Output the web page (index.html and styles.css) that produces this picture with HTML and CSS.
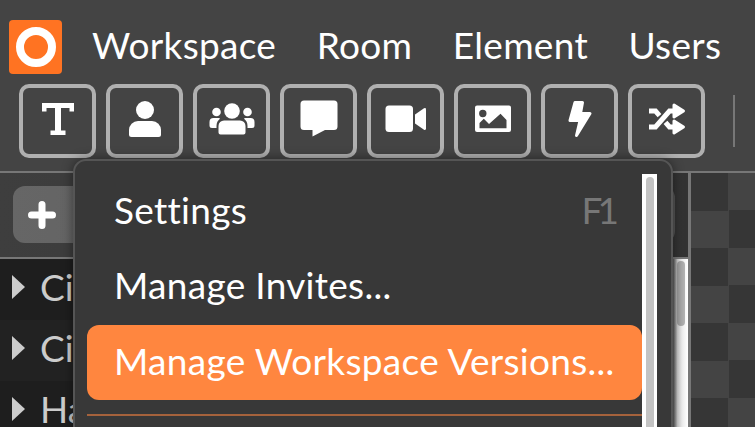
FILE: index.html
```html
<!DOCTYPE html>
<html lang="en">
<head>
<meta charset="utf-8">
<title>Workspace</title>
<link rel="stylesheet" href="styles.css">
</head>
<body>
<div class="app">
  <header class="topbar">
    <div class="menubar">
      <div class="logo"><span class="logo-ring"></span></div>
      <nav class="menus">
        <span class="menu-title">Workspace</span>
        <span class="menu-title">Room</span>
        <span class="menu-title">Element</span>
        <span class="menu-title">Users</span>
      </nav>
    </div>
    <div class="toolbar">
      <button class="tool"><svg viewBox="0 0 46 38"><path d="M7 3h32v8.500h-4.500V8H26v22.500h4.500V35h-15v-4.500H20V8h-8.500v3.500H7z"/></svg></button>
      <button class="tool"><svg viewBox="0 0 46 38"><circle cx="23" cy="10" r="9"/><path d="M16 21h14a9 9 0 0 1 9 9v4.500a2.500 2.500 0 0 1-2.500 2.500h-27A2.500 2.500 0 0 1 7 34.500V30a9 9 0 0 1 9-9z"/></svg></button>
      <button class="tool"><svg viewBox="0 0 46 38"><circle cx="23" cy="11" r="7.800"/><circle cx="7.500" cy="12" r="4.300"/><circle cx="38.500" cy="12" r="4.300"/><path d="M15 20.500h16a5.500 5.500 0 0 1 5.500 5.500v6.500a2 2 0 0 1-2 2h-23a2 2 0 0 1-2-2V26a5.500 5.500 0 0 1 5.500-5.500z"/><path d="M4.500 18H9.500q1.500 0 1.500 .8q-3.500 2.500-3.500 7.200V28H3a2.500 2.500 0 0 1-2.500-2.500V22a4 4 0 0 1 4-4z"/><path d="M41.500 18H36.500q-1.500 0-1.500 .8q3.500 2.500 3.500 7.200V28H43a2.500 2.500 0 0 0 2.500-2.500V22a4 4 0 0 0-4-4z"/></svg></button>
      <button class="tool"><svg viewBox="0 0 46 38"><path d="M8 .5h30a3.500 3.500 0 0 1 3.500 3.500v22.500a3.500 3.500 0 0 1-3.500 3.500H29L16.500 36.500V30H8a3.500 3.500 0 0 1-3.500-3.500V4A3.500 3.500 0 0 1 8 .5z"/></svg></button>
      <button class="tool"><svg viewBox="0 0 46 38"><rect x="2.500" y="5.500" width="27.500" height="26.500" rx="3.500"/><path d="M32 14.500L41 8.300q2-.8 2 1.200V28.500q0 2-2 1.200L32 23.500z"/></svg></button>
      <button class="tool"><svg viewBox="0 0 46 38"><path fill-rule="evenodd" d="M7 5.500h32a2 2 0 0 1 2 2V30a2 2 0 0 1-2 2H7a2 2 0 0 1-2-2V7.500a2 2 0 0 1 2-2zM9.500 28.200V23L13.800 18.800L19 24L30.500 13.800L36.500 20V28.200zM12.800 9.800a3.700 3.700 0 1 0 0 7.400a3.700 3.700 0 0 0 0-7.400z"/></svg></button>
      <button class="tool"><svg viewBox="0 0 46 38"><path class="bolt" d="M18 2.500h7.500L23.500 13.500H33L19.500 35.500L23 20.500H13z"/></svg></button>
      <button class="tool"><svg viewBox="0 0 46 38"><path class="shuffle-line" d="M5 27h6.500l14-16H31M5 11h6.500l4 4.600M21.500 22.400l4 4.600H31"/><path class="shuffle-head" d="M30 5l9.500 6L30 17zM30 21l9.500 6L30 33z"/></svg></button>
      <span class="tool-sep"></span>
    </div>
  </header>
  <main class="main">
    <section class="panel">
      <div class="panel-head">
        <button class="add-btn"><svg class="plus" viewBox="0 0 28 28"><path d="M14 3.500v21M3.500 14h21"/></svg></button>
      </div>
      <div class="panel-body">
        <ul class="tree">
          <li class="tree-row"><span class="caret"></span>Ci</li>
          <li class="tree-row tree-row-alt"><span class="caret"></span>Ci</li>
          <li class="tree-row"><span class="caret"></span>Ha</li>
        </ul>
        <div class="tree-scroll"><span class="tree-thumb"></span></div>
      </div>
    </section>
    <section class="canvas"></section>
  </main>
  <div class="dropdown">
    <div class="dropdown-list">
      <div class="item"><span>Settings</span><span class="shortcut">F1</span></div>
      <div class="item"><span>Manage Invites...</span></div>
      <div class="item item-active"><span>Manage Workspace Versions...</span></div>
      <hr class="item-sep">
    </div>
    <div class="dropdown-scroll"><span class="dropdown-thumb"></span></div>
  </div>
</div>
</body>
</html>
```

FILE: styles.css
```css
* { box-sizing: border-box; }
html, body { margin: 0; height: 100%; overflow: hidden; }
body { background: #444; color: #fff; font-family: Lato, "Liberation Sans", sans-serif; }
.app { position: relative; width: 755px; height: 427px; overflow: hidden; display: flex; flex-direction: column; }

.topbar { height: 173px; flex: none; background: #444; border-bottom: 2px solid #777; padding: 20px 0 0 9px; }
.menubar { display: flex; align-items: center; height: 54px; }
.logo { width: 53px; height: 54px; border-radius: 4px; background: #ff7322; display: flex; align-items: center; justify-content: center; }
.logo-ring { width: 40px; height: 40px; border-radius: 50%; border: 8.500px solid #fff; }
.menus { display: flex; gap: 40.500px; margin-left: 30px; padding-bottom: 4px; font-size: 37px; line-height: 50px; letter-spacing: .3px; }
.menu-title { white-space: nowrap; }

.toolbar { display: flex; gap: 10px; align-items: center; margin: 10px 0 0 10px; }
.tool { width: 77px; height: 74px; padding: 0 0 5px; background: none; border: 4px solid #b0b0b0; border-radius: 10px; display: flex; align-items: center; justify-content: center; }
.tool svg { width: 46px; height: 38px; flex: none; fill: #fff; }
.bolt { stroke: #fff; stroke-width: 3; stroke-linejoin: round; }
.shuffle-line { fill: none; stroke: #fff; stroke-width: 5; }
.shuffle-head { stroke: #fff; stroke-width: 3; stroke-linejoin: round; }
.tool-sep { width: 2px; height: 52px; margin-left: 18px; background: #777; }

.main { flex: 1; display: flex; min-height: 0; }
.panel { width: 688px; flex: none; display: flex; flex-direction: column; }
.panel-head { height: 86px; flex: none; padding-top: 13px; padding-left: 13px; background: linear-gradient(90deg, #3e3e3e, #333); border-bottom: 2px solid #777; }
.add-btn { width: 662px; height: 57px; padding: 0 0 0 15px; border: 0; border-radius: 12px; background: linear-gradient(90deg, #666, #555); display: flex; align-items: center; }
.plus { width: 28px; height: 28px; fill: none; stroke: #fff; stroke-width: 7; stroke-linecap: round; }
.panel-body { flex: 1; display: flex; background: #1e1e1e; min-height: 0; }
.tree { flex: 1; list-style: none; margin: 0; padding: 0; }
.tree-row { height: 61px; display: flex; align-items: center; padding: 0 0 7px 12px; font-size: 37px; color: #ccc; white-space: nowrap; }
.tree-row-alt { background: #222; }
.caret { width: 0; height: 0; margin: 2px 15px 0 0; border-style: solid; border-width: 12px 0 12px 13px; border-color: transparent transparent transparent #ccc; }
.tree-scroll { width: 15px; flex: none; padding: 2px 3px 0 4px; background: linear-gradient(90deg, #555, #ccc 30%, #eee 60%, #fff); }
.tree-thumb { display: block; height: 65px; border-radius: 4px; background: linear-gradient(90deg, #999, #b5b5b5); }

.canvas { flex: 1; border-left: 3px solid #777; background-color: #444; background-image: conic-gradient(#444 25%, #363636 0 50%, #444 0 75%, #363636 0); background-size: 75px 75px; background-origin: padding-box; }

.dropdown { position: absolute; left: 73px; top: 159px; width: 600px; height: 300px; display: flex; padding: 13px 14px 0 12px; background: #383838; border: 2px solid #555; border-radius: 13px; box-shadow: 0 0 12px rgba(0, 0, 0, .45); }
.dropdown-list { flex: 1; min-width: 0; }
.item { height: 75.5px; display: flex; align-items: center; justify-content: space-between; padding: 0 28px 5px 27px; font-size: 37px; letter-spacing: .3px; border-radius: 12px; white-space: nowrap; }
.item-active { height: 75px; background: #ff863f; }
.shortcut { color: #777; letter-spacing: -5px; }
.item-sep { height: 2px; margin: 14px 0 0; border: 0; background: #a5623c; }
.dropdown-scroll { width: 15px; flex: none; padding: 3px 3px 0 4px; background: #fff; }
.dropdown-thumb { display: block; height: 400px; border-radius: 4px; background: #c3c3c3; }
```
